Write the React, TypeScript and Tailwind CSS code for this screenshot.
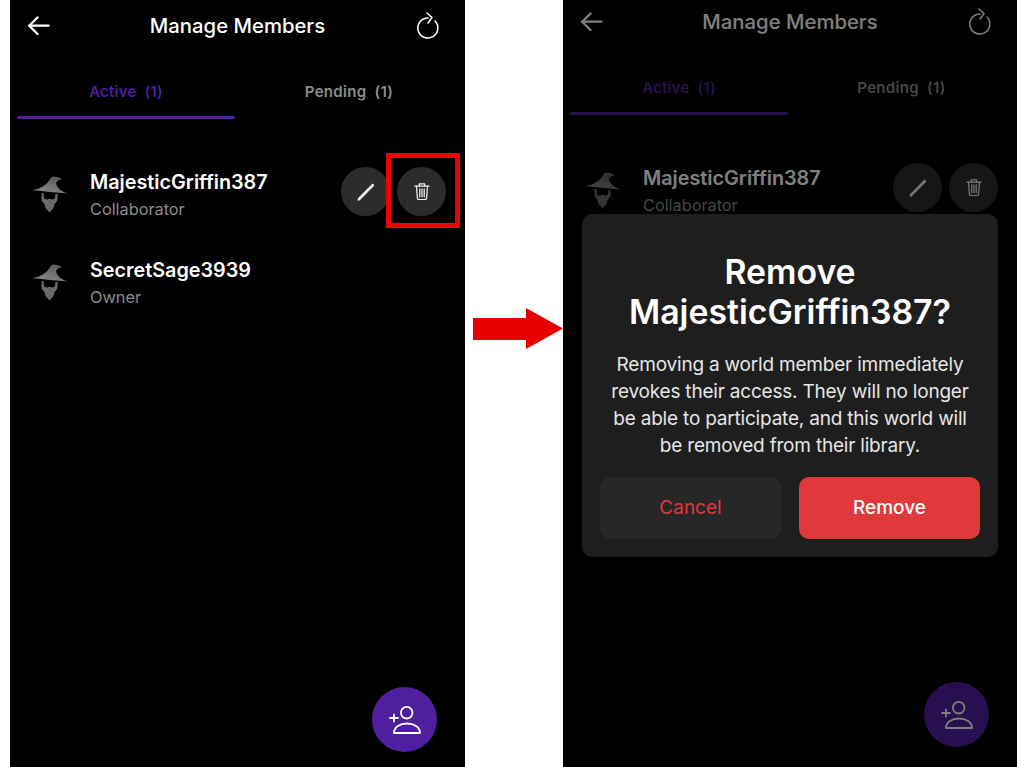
import React from 'react';

function BackIcon() {
  return (
    <svg width="24" height="24" viewBox="0 0 24 24" fill="none" stroke="currentColor" strokeWidth="2.3" strokeLinecap="round" strokeLinejoin="round">
      <path d="M1.2 11.7H20.5" />
      <path d="M9.5 3.5L1.2 11.7L9.5 20" />
    </svg>
  );
}

function RefreshIcon() {
  return (
    <svg width="26" height="30" viewBox="0 0 26 30" fill="none" stroke="currentColor" strokeWidth="1.5" strokeLinecap="round" strokeLinejoin="round">
      <path d="M13 7A10 10 0 1 0 20 10" />
      <path d="M12 2L17 6.5L13 12" />
    </svg>
  );
}

function PencilIcon() {
  return (
    <svg width="20" height="20" viewBox="0 0 20 20" fill="none">
      <path d="M1.5 18L2.2 16L16 2.1C17.2 1.2 18.8 2.8 17.9 4L3.8 18.2L2 18.7Z" fill="currentColor" />
    </svg>
  );
}

function TrashIcon() {
  return (
    <svg width="16" height="19" viewBox="0 0 18 20" fill="none" stroke="currentColor" strokeWidth="1.4" strokeLinecap="round" strokeLinejoin="round">
      <path d="M1 4H17" />
      <path d="M6 4V1.5H12V4" />
      <path d="M2.8 4L3.8 17.5C3.9 18.5 4.5 19 5.4 19H12.6C13.5 19 14.1 18.5 14.2 17.5L15.2 4" />
      <path d="M6.5 7V16M9 7V16M11.5 7V16" />
    </svg>
  );
}

function AddMemberIcon() {
  return (
    <svg width="32" height="28" viewBox="0 0 32 28" fill="none" stroke="currentColor" strokeWidth="1.8" strokeLinecap="round" strokeLinejoin="round">
      <circle cx="17.7" cy="6.7" r="5.8" />
      <path d="M5 27C5 21 11 17.5 18 17.5C25 17.5 31 21 31 27Z" />
      <path d="M1 12H9M5 8.5V15.5" />
    </svg>
  );
}

function WizardIcon({ id }: { id: string }) {
  return (
    <svg width="60" height="60" viewBox="0 0 60 60" fill="none" className="shrink-0">
      <defs>
        <linearGradient id={id} x1="0.1" y1="1" x2="0.8" y2="0">
          <stop offset="0" stopColor="#8e8e8e" />
          <stop offset="1" stopColor="#565656" />
        </linearGradient>
      </defs>
      <path d="M12 25C21 24 27 20 31 12.5C33 10.5 37 11.5 42 14C38.5 15 37 16 36 18C37 23 41 26.5 48 28.5C36 27.5 25 26.5 12 25Z" fill={`url(#${id})`} />
      <path d="M21.5 28L23.5 28L24 33C25.5 35 27.5 34.5 29.5 33.5C31.5 34.5 33.5 35 35 33L35.5 29L37.5 29L37.5 35C37 37 35 38 34.5 39L33.5 43L29.5 47.5L25.5 43L24.5 39C24 38 22 37 21.5 35Z" fill="#6a6a6a" />
    </svg>
  );
}

function RoundButton({ children }: { children: React.ReactNode }) {
  return (
    <div className="relative w-[49px] h-[49px] rounded-full bg-[#2c2c2c] text-[#efefef] flex items-center justify-center">
      {children}
    </div>
  );
}

function MemberRow({ id, name, role, actions, marked }: { id: string; name: string; role: string; actions?: boolean; marked?: boolean }) {
  return (
    <div className="flex items-start h-[88px]">
      <div className="mt-[18px] ml-[10px] mr-[10px]">
        <WizardIcon id={id} />
      </div>
      <div className="pt-[23px]">
        <div className="text-[19.8px] leading-6 font-semibold text-white">{name}</div>
        <div className="mt-1 text-[16.3px] leading-[22px] text-[#8c8c8c]">{role}</div>
      </div>
      {actions && (
        <div className="ml-auto mt-5 mr-[19px] flex gap-[7px]">
          <RoundButton>
            <PencilIcon />
          </RoundButton>
          <RoundButton>
            <TrashIcon />
            {marked && (
              <div className="absolute left-[-11px] right-[-14px] top-[-14px] bottom-[-12px] border-[5px] border-[#f00000]" />
            )}
          </RoundButton>
        </div>
      )}
    </div>
  );
}

function Screen({ dimmed, children }: { dimmed?: boolean; children?: React.ReactNode }) {
  return (
    <div className={`relative h-[767px] shrink-0 bg-black overflow-hidden ${dimmed ? 'w-[454px]' : 'w-[455px]'}`}>
      <div className={dimmed ? '-mt-1' : ''}>
        <div className="h-[52px] px-[18px] flex items-center justify-between text-white">
          <div className="w-8">
            <BackIcon />
          </div>
          <div className="text-[20.3px] font-medium">Manage Members</div>
          <div className="w-8">
            <RefreshIcon />
          </div>
        </div>
        <div className="flex pl-[7px]">
          <div className="w-[218px] flex flex-col items-center pt-[30px]">
            <div className="text-[15px] leading-5 font-semibold tracking-[0.2px] text-[#4f1fa0] whitespace-pre">Active  (1)</div>
            <div className="mt-[14px] w-full h-[3px] rounded-full bg-[#4f1fa0]" />
          </div>
          <div className="flex-1 flex justify-center pt-[30px] pr-[2px]">
            <div className="text-[15px] leading-5 font-semibold tracking-[0.3px] text-[#8c8c8c] whitespace-pre">Pending  (1)</div>
          </div>
        </div>
        <div className="mt-7">
          <MemberRow id={dimmed ? 'hat-a2' : 'hat-a1'} name="MajesticGriffin387" role="Collaborator" actions marked={!dimmed} />
          {/* second row sits behind the dialog on the dimmed screen */}
          {!dimmed && <MemberRow id="hat-b1" name="SecretSage3939" role="Owner" />}
        </div>
      </div>
      <div className={`absolute right-[28px] w-[65px] h-[65px] rounded-full bg-[#4f1fa0] text-white flex items-center justify-center ${dimmed ? 'bottom-5' : 'bottom-[15px]'}`}>
        <AddMemberIcon />
      </div>
      {dimmed && <div className="absolute inset-0 bg-black/50" />}
      {children}
    </div>
  );
}

function RemoveDialog() {
  return (
    <div className="absolute left-[19px] right-[19px] top-[214px] rounded-[10px] bg-[#1e1e1e] px-[18px] pt-[38px] pb-[18px]">
      <div className="text-[33.8px] leading-10 font-semibold text-white text-center whitespace-nowrap">
        Remove
        <br />
        MajesticGriffin387?
      </div>
      <div className="mt-[19px] text-[19px] tracking-[-0.2px] leading-[27px] text-[#e6e6e6] text-center whitespace-nowrap">
        Removing a world member immediately
        <br />
        revokes their access. They will no longer
        <br />
        be able to participate, and this world will
        <br />
        be removed from their library.
      </div>
      <div className="mt-[18px] flex gap-[18px]">
        <div className="flex-1 h-[62px] rounded-[10px] bg-[#272727] text-[#e0393b] text-[19px] flex items-center justify-center">Cancel</div>
        <div className="flex-1 h-[62px] rounded-[10px] bg-[#e0393b] text-white text-[19px] font-medium flex items-center justify-center">Remove</div>
      </div>
    </div>
  );
}

export default function App() {
  return (
    <div className="w-[1024px] h-[767px] overflow-hidden bg-white pl-[10px] flex font-['Inter',sans-serif]">
      <Screen />
      <div className="w-[98px] shrink-0 flex items-start pl-2 pt-[308px]">
        <svg width="90" height="42" viewBox="0 0 90 42">
          <path d="M0 10H53V0L90 20.5L53 41V32H0Z" fill="#e80000" />
        </svg>
      </div>
      <Screen dimmed>
        <RemoveDialog />
      </Screen>
    </div>
  );
}
